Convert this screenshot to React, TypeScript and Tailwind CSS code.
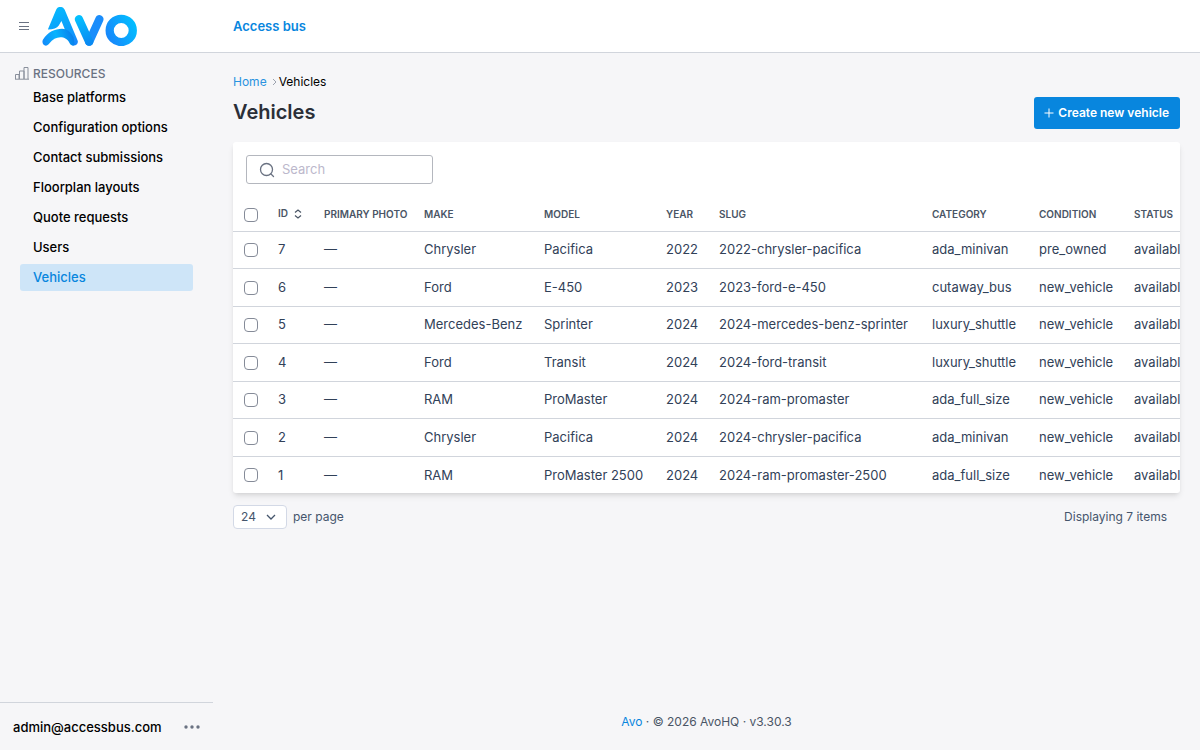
import { useState } from "react";

type Vehicle = {
     id: number;
     make: string;
     model: string;
     year: number;
     slug: string;
     category: string;
     condition: string;
     status: string;
};

const resources = ["Base platforms", "Configuration options", "Contact submissions", "Floorplan layouts", "Quote requests", "Users", "Vehicles"];

const headings = ["Primary photo", "Make", "Model", "Year", "Slug", "Category", "Condition", "Status"];

const vehicles: Vehicle[] = [
     { id: 7, make: "Chrysler", model: "Pacifica", year: 2022, slug: "2022-chrysler-pacifica", category: "ada_minivan", condition: "pre_owned", status: "available" },
     { id: 6, make: "Ford", model: "E-450", year: 2023, slug: "2023-ford-e-450", category: "cutaway_bus", condition: "new_vehicle", status: "available" },
     { id: 5, make: "Mercedes-Benz", model: "Sprinter", year: 2024, slug: "2024-mercedes-benz-sprinter", category: "luxury_shuttle", condition: "new_vehicle", status: "available" },
     { id: 4, make: "Ford", model: "Transit", year: 2024, slug: "2024-ford-transit", category: "luxury_shuttle", condition: "new_vehicle", status: "available" },
     { id: 3, make: "RAM", model: "ProMaster", year: 2024, slug: "2024-ram-promaster", category: "ada_full_size", condition: "new_vehicle", status: "available" },
     { id: 2, make: "Chrysler", model: "Pacifica", year: 2024, slug: "2024-chrysler-pacifica", category: "ada_minivan", condition: "new_vehicle", status: "available" },
     { id: 1, make: "RAM", model: "ProMaster 2500", year: 2024, slug: "2024-ram-promaster-2500", category: "ada_full_size", condition: "new_vehicle", status: "available" },
];

const checkboxClass = "block size-[14px] appearance-none rounded-[4px] border border-[#858b98] bg-white checked:bg-[#0886de]";

function Logo() {
     return (
          <svg viewBox="125 20 286 118" className="h-[39px] w-[95px]" fill="none" strokeLinecap="round" strokeLinejoin="round" aria-label="Avo">
               <defs>
                    <linearGradient id="leg" gradientUnits="userSpaceOnUse" x1="170" y1="20" x2="215" y2="138">
                         <stop offset="0" stopColor="#06b9fd" />
                         <stop offset="0.6" stopColor="#0c9dfb" />
                         <stop offset="1" stopColor="#1a86fb" />
                    </linearGradient>
                    <linearGradient id="swoosh" gradientUnits="userSpaceOnUse" x1="125" y1="130" x2="225" y2="100">
                         <stop offset="0" stopColor="#1488fa" />
                         <stop offset="0.45" stopColor="#07b4fe" />
                         <stop offset="1" stopColor="#0876e8" />
                    </linearGradient>
                    <linearGradient id="vee" gradientUnits="userSpaceOnUse" x1="235" y1="50" x2="265" y2="130">
                         <stop offset="0" stopColor="#03c0ff" />
                         <stop offset="1" stopColor="#0a8af2" />
                    </linearGradient>
                    <linearGradient id="ring" gradientUnits="userSpaceOnUse" x1="325" y1="110" x2="405" y2="70">
                         <stop offset="0" stopColor="#1789fb" />
                         <stop offset="1" stopColor="#02bdff" />
                    </linearGradient>
               </defs>
               <path d="M167 28 C172 17 187 17 193 28 L232 121 C237 134 219 143 211 131 L183 62 L175 76 Q167 88 142 88 Z" fill="url(#leg)" />
               <path d="M127 119 C142 96 163 86 185 86 C199 86 210 94 220 112 L223 134 C217 139 211 136 208 130 C196 104 163 107 147 130 C136 145 121 133 127 119Z" fill="url(#swoosh)" />
               <path d="M298 57 L267 125" stroke="#1a8dfb" strokeWidth="25" />
               <path d="M236 57 L267 125" stroke="url(#vee)" strokeWidth="25" />
               <circle cx="364" cy="91" r="35" stroke="url(#ring)" strokeWidth="25" />
          </svg>
     );
}

function Sidebar() {
     return (
          <aside className="flex w-[213px] shrink-0 flex-col text-[13px] font-medium text-black">
               <div className="flex h-10 items-center gap-1 pl-[15px] text-[12px] text-gray-500">
                    <svg viewBox="0 0 14 14" className="size-[14px]" fill="none" stroke="#8a909c">
                         <path d="M.5 13V8.500H4V13M4.500 13V5H9V13M9 13V1.500H13V13M0 13.200H14" />
                    </svg>
                    <span className="pt-px uppercase">Resources</span>
               </div>
               <nav className="-mt-[9px] flex flex-col gap-[3px] px-5">
                    {resources.map((name) => (
                         <a key={name} href="#" className={name === "Vehicles" ? "rounded-[3px] bg-[#cee5f8] px-[13px] leading-[27px] text-[#0886de]" : "rounded-[3px] px-[13px] leading-[27px]"}>
                              {name}
                         </a>
                    ))}
               </nav>
               <div className="mt-auto flex h-12 items-center justify-between border-t border-gray-300 pr-3 pl-[13px]">
                    <span className="pt-[2px]">admin@accessbus.com</span>
                    <button aria-label="Account menu" className="text-gray-500">
                         <svg viewBox="0 0 18 4" className="h-1 w-[18px]" fill="currentColor">
                              <circle cx="3" cy="2" r="1.700" />
                              <circle cx="9" cy="2" r="1.700" />
                              <circle cx="15" cy="2" r="1.700" />
                         </svg>
                    </button>
               </div>
          </aside>
     );
}

function VehiclesTable() {
     const [selected, setSelected] = useState<number[]>([]);

     const toggle = (id: number) => {
          setSelected(selected.includes(id) ? selected.filter((item) => item !== id) : [...selected, id]);
     };

     return (
          <table className="w-[982px] table-fixed border-collapse text-left whitespace-nowrap text-slate-700">
               <colgroup>
                    <col className="w-[35px]" />
                    <col className="w-[46px]" />
                    <col className="w-[100px]" />
                    <col className="w-[120px]" />
                    <col className="w-[122px]" />
                    <col className="w-[53px]" />
                    <col className="w-[213px]" />
                    <col className="w-[107px]" />
                    <col className="w-[95px]" />
                    <col />
               </colgroup>
               <thead>
                    <tr className="h-[34px] border-b border-gray-300 text-[10px] text-gray-600 uppercase">
                         <th className="pt-[2px] pl-[11px]">
                              <input type="checkbox" aria-label="Select all" className={checkboxClass} checked={selected.length === vehicles.length} onChange={() => setSelected(selected.length ? [] : vehicles.map((v) => v.id))} />
                         </th>
                         <th className="pl-[10px] font-semibold">
                              <button className="flex items-center gap-[6px] uppercase">
                                   ID
                                   <svg viewBox="0 0 8 10" className="h-[10px] w-2" fill="none" stroke="currentColor" strokeWidth="1.200">
                                        <path d="M1 3.500L4 1L7 3.500M1 6.500L4 9L7 6.500" />
                                   </svg>
                              </button>
                         </th>
                         {headings.map((heading) => (
                              <th key={heading} className="pt-[2px] pl-[10px] font-semibold">
                                   {heading}
                              </th>
                         ))}
                    </tr>
               </thead>
               <tbody className="text-[13px]">
                    {vehicles.map((v) => (
                         <tr key={v.id} className="border-b border-gray-300 last:border-0 odd:h-[37px] even:h-[38px] [&>td]:pt-px">
                              <td className="pl-[11px]">
                                   <input type="checkbox" aria-label={`Select vehicle ${v.id}`} className={checkboxClass} checked={selected.includes(v.id)} onChange={() => toggle(v.id)} />
                              </td>
                              <td className="pl-[10px]">{v.id}</td>
                              <td className="pl-[10px]">—</td>
                              <td className="pl-[10px]">{v.make}</td>
                              <td className="pl-[10px]">{v.model}</td>
                              <td className="pl-[10px]">{v.year}</td>
                              <td className="pl-[10px]">{v.slug}</td>
                              <td className="pl-[10px]">{v.category}</td>
                              <td className="pl-[10px]">{v.condition}</td>
                              <td className="pl-[10px]">{v.status}</td>
                         </tr>
                    ))}
               </tbody>
          </table>
     );
}

export default function App() {
     return (
          <div className="flex min-h-screen flex-col bg-[#f6f6f8] font-['Inter',sans-serif]">
               <header className="flex h-[53px] items-center border-b border-gray-300 bg-white">
                    <div className="flex w-[233px] items-center gap-[13px] pl-[19px]">
                         <button aria-label="Toggle sidebar" className="text-gray-500">
                              <svg viewBox="0 0 10 10" className="size-[10px]" stroke="currentColor">
                                   <path d="M0 1.500H10M0 5.500H10M0 8.500H10" />
                              </svg>
                         </button>
                         <Logo />
                    </div>
                    <a href="#" className="pt-[2px] text-[13px] font-semibold text-[#0886de]">
                         Access bus
                    </a>
               </header>

               <div className="flex flex-1">
                    <Sidebar />
                    <main className="flex min-w-0 flex-1 flex-col px-5 pt-5">
                         <nav className="flex items-center text-[12px] leading-[18px]">
                              <a href="#" className="text-[#2a93e0]">
                                   Home
                              </a>
                              <svg viewBox="0 0 12 10" className="h-[10px] w-3" fill="none" stroke="#9ca3af">
                                   <path d="M6 2L9 5L6 8" />
                              </svg>
                              <span>Vehicles</span>
                         </nav>
                         <div className="mt-[6px] flex h-8 items-start justify-between">
                              <h1 className="text-[20px] leading-[30px] font-semibold text-[#2b2f38]">Vehicles</h1>
                              <button className="flex h-8 items-center gap-[3px] rounded-[3px] bg-[#0886de] pr-[11px] pl-[9px] text-[12px] font-semibold text-white">
                                   <svg viewBox="0 0 12 12" className="size-3" stroke="currentColor">
                                        <path d="M6 1.500V10.500M1.500 6H10.500" />
                                   </svg>
                                   Create new vehicle
                              </button>
                         </div>

                         <section className="mt-[13px] overflow-hidden rounded-[3px] bg-white shadow-md">
                              <div className="p-[13px]">
                                   <label className="flex h-[29px] w-[187px] items-center gap-[7px] rounded-[3px] border border-[#b4b7be] pl-3">
                                        <svg viewBox="0 0 16 16" className="size-4 shrink-0 text-gray-500" fill="none" stroke="currentColor" strokeWidth="1.300" strokeLinecap="round">
                                             <circle cx="7.500" cy="7.500" r="6" />
                                             <path d="M12 12L14.500 14.500" />
                                        </svg>
                                        <input type="search" aria-label="Search" placeholder="Search" className="min-w-0 flex-1 bg-transparent text-[13px] outline-none placeholder:text-[#bcb8cc]" />
                                   </label>
                              </div>
                              <VehiclesTable />
                         </section>

                         <div className="mt-3 flex items-center justify-between pr-[13px] text-[12px] text-slate-600">
                              <label className="flex items-center gap-[6px]">
                                   <span className="grid items-center">
                                        <select className="col-start-1 row-start-1 h-6 w-[54px] appearance-none rounded-[4px] border border-[#d3d9e6] bg-white pl-[7px]">
                                             <option>24</option>
                                             <option>48</option>
                                             <option>72</option>
                                        </select>
                                        <svg viewBox="0 0 10 6" className="pointer-events-none col-start-1 row-start-1 mr-[11px] h-[6px] w-[10px] justify-self-end" fill="none" stroke="currentColor" strokeWidth="1.300">
                                             <path d="M1 1L5 5L9 1" />
                                        </svg>
                                   </span>
                                   per page
                              </label>
                              <span>Displaying 7 items</span>
                         </div>

                         <footer className="mt-auto pb-[19px] text-center text-[12px] leading-[18px] text-gray-600">
                              <a href="#" className="text-[#0886de]">
                                   Avo
                              </a>{" "}
                              · © 2026 AvoHQ · v3.30.3
                         </footer>
                    </main>
               </div>
          </div>
     );
}
